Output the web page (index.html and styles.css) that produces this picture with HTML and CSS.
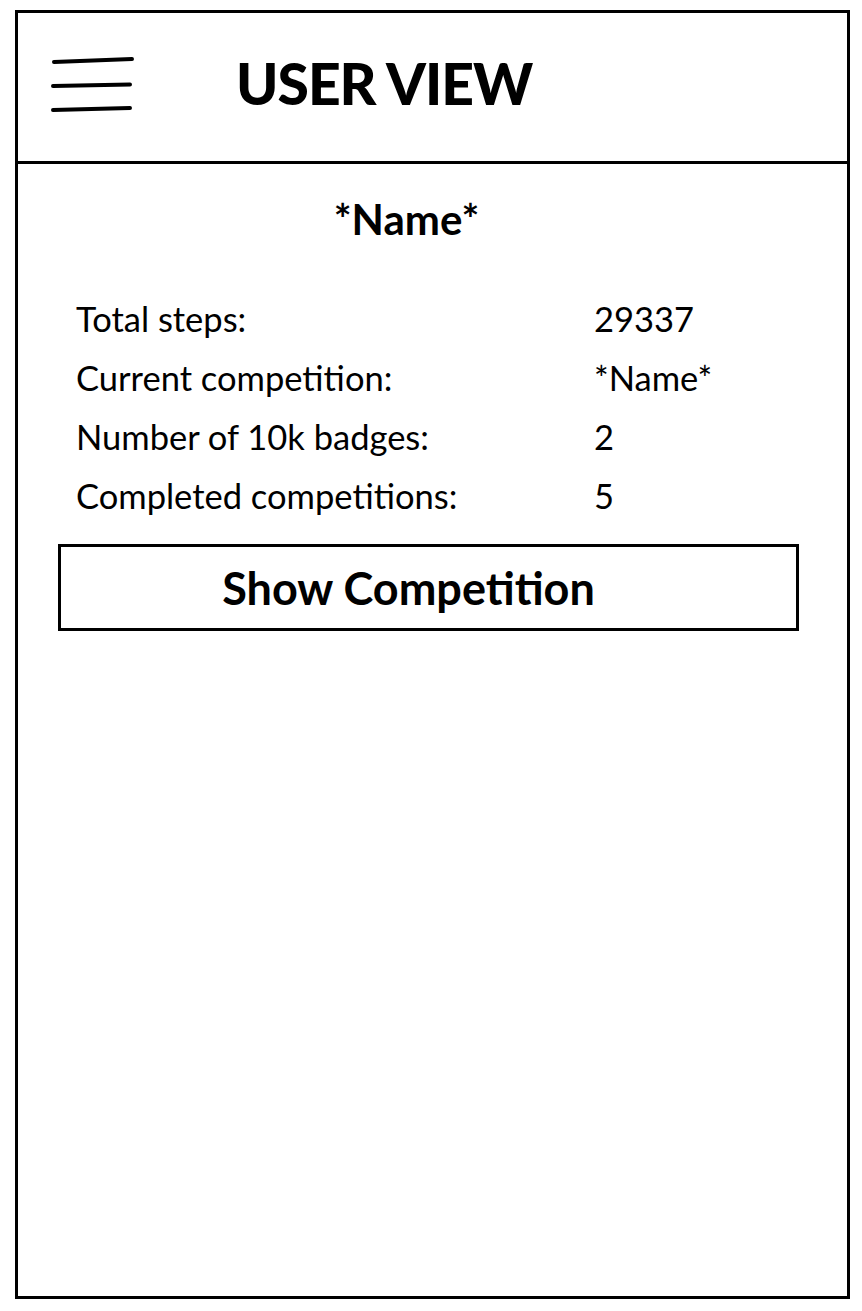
FILE: index.html
```html
<!DOCTYPE html>
<html lang="en">
<head>
<meta charset="utf-8">
<title>User View</title>
<link rel="stylesheet" href="styles.css">
</head>
<body>
<div class="frame">
  <header class="header">
    <svg class="menu" width="84" height="56" viewBox="0 0 84 56" aria-hidden="true">
      <path d="M3 6 L81 3" />
      <path d="M2 30 L79 28.5" />
      <path d="M2 54 L79 52" />
    </svg>
    <h1 class="title">USER VIEW</h1>
  </header>
  <main class="content">
    <h2 class="name">*Name*</h2>
    <div class="stats">
      <div class="stat"><span class="label">Total steps:</span><span class="value">29337</span></div>
      <div class="stat"><span class="label">Current competition:</span><span class="value">*Name*</span></div>
      <div class="stat"><span class="label">Number of 10k badges:</span><span class="value">2</span></div>
      <div class="stat"><span class="label">Completed competitions:</span><span class="value">5</span></div>
    </div>
    <button class="show-btn" type="button">Show Competition</button>
  </main>
</div>
</body>
</html>
```

FILE: styles.css
```css
html, body {
  margin: 0;
  padding: 0;
  background: #fff;
}
body {
  font-family: Lato, "Open Sans", sans-serif;
  color: #000;
  padding: 10px 0 0 15px;
}
.frame {
  box-sizing: border-box;
  width: 835px;
  height: 1289px;
  border: 3px solid #000;
  display: flex;
  flex-direction: column;
}
.header {
  box-sizing: border-box;
  height: 151px;
  border-bottom: 3px solid #000;
  display: flex;
  align-items: center;
  padding-left: 33px;
  padding-bottom: 8px;
}
.menu {
  flex: none;
  margin-top: 2px;
}
.menu path {
  stroke: #000;
  stroke-width: 4;
  stroke-linecap: round;
  fill: none;
}
.title {
  margin: 0 0 0 101px;
  font-size: 57px;
  font-weight: 900;
  letter-spacing: -1px;
  line-height: 1;
}
.content {
  padding: 0 48px 0 40px;
}
.name {
  margin: 31px 44px 0 0;
  text-align: center;
  font-size: 42px;
  font-weight: 700;
  line-height: 48px;
}
.stats {
  margin-top: 54px;
  padding-left: 18px;
  display: flex;
  flex-direction: column;
  gap: 15px;
}
.stat {
  display: flex;
  font-size: 34.5px;
  line-height: 44px;
}
.label {
  width: 518px;
}
.show-btn {
  display: block;
  box-sizing: border-box;
  width: 741px;
  height: 87px;
  margin-top: 26px;
  border: 3px solid #000;
  background: #fff;
  font-family: inherit;
  font-size: 45px;
  font-weight: 700;
  color: #000;
  padding: 0 40px 0 0;
}
```
